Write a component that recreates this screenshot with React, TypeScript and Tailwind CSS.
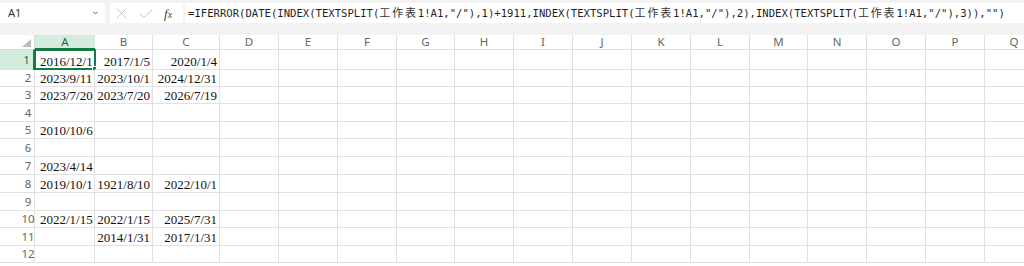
import React from "react";

const cols = [
  { id: "A", w: "w-[60px]" },
  { id: "B", w: "w-[58px]" },
  { id: "C", w: "w-[67px]" },
  { id: "D", w: "w-[59px]" },
  { id: "E", w: "w-[59px]" },
  { id: "F", w: "w-[59px]" },
  { id: "G", w: "w-[58px]" },
  { id: "H", w: "w-[59px]" },
  { id: "I", w: "w-[59px]" },
  { id: "J", w: "w-[59px]" },
  { id: "K", w: "w-[59px]" },
  { id: "L", w: "w-[59px]" },
  { id: "M", w: "w-[58px]" },
  { id: "N", w: "w-[59px]" },
  { id: "O", w: "w-[59px]" },
  { id: "P", w: "w-[59px]" },
  { id: "Q", w: "w-[59px]" },
];

const rowHeights = [
  "h-[20px]", "h-[17px]", "h-[17px]", "h-[18px]", "h-[17px]", "h-[18px]",
  "h-[18px]", "h-[18px]", "h-[18px]", "h-[17px]", "h-[18px]", "h-[17px]",
];

const data: string[][] = [
  ["2016/12/1", "2017/1/5", "2020/1/4"],
  ["2023/9/11", "2023/10/1", "2024/12/31"],
  ["2023/7/20", "2023/7/20", "2026/7/19"],
  [],
  ["2010/10/6"],
  [],
  ["2023/4/14"],
  ["2019/10/1", "1921/8/10", "2022/10/1"],
  [],
  ["2022/1/15", "2022/1/15", "2025/7/31"],
  ["", "2014/1/31", "2017/1/31"],
  [],
];

const SHEET = "工作表";

function Sheet() {
  return <span className="font-['Noto_Sans_CJK_TC',sans-serif] text-[11px] tracking-[1.8px] text-[#333]">{SHEET}</span>;
}

function Formula() {
  return (
    <div className="whitespace-nowrap font-['DejaVu_Sans_Mono',monospace] text-[10.6px] text-[#1f1f1f]">
      =IFERROR(DATE(INDEX(TEXTSPLIT(<Sheet />1!A1,"/"),1)+1911,INDEX(TEXTSPLIT(<Sheet />1!A1,"/"),2),INDEX(TEXTSPLIT(<Sheet />1!A1,"/"),3)),"")
    </div>
  );
}

export default function App() {
  return (
    <div className="h-[266px] w-[1024px] overflow-hidden bg-white font-['Noto_Sans',sans-serif]">
      {/* formula bar */}
      <div className="flex h-[35px] bg-[#f3f3f3] pt-[3px]">
        <div className="flex h-[20px] w-[105px] items-center justify-between bg-white pl-[8px] pr-[7px]">
          <span className="text-[11px] text-[#333]">A1</span>
          <svg width="5" height="4" viewBox="0 0 5 4">
            <path d="M0.5 0.8 L2.5 3 L4.5 0.8" fill="none" stroke="#666" strokeWidth="1" />
          </svg>
        </div>
        <div className="ml-[5px] flex h-[20px] w-[73px] items-center bg-white pl-[6px]">
          <svg width="11" height="11" viewBox="0 0 11 11">
            <path d="M0.5 0.5 L10.5 10.5 M10.5 0.5 L0.5 10.5" stroke="#c4c4c4" strokeWidth="1" />
          </svg>
          <svg className="ml-[12px]" width="14" height="9" viewBox="0 0 14 9">
            <path d="M0.5 4.5 L4.5 8.5 L13.5 0.5" fill="none" stroke="#c4c4c4" strokeWidth="1" />
          </svg>
          <span className="ml-[11px] font-['Liberation_Serif',serif] text-[13px] italic leading-none text-[#444]">
            f<span className="text-[10px]">x</span>
          </span>
        </div>
        <div className="ml-[2px] flex h-[20px] flex-1 items-center bg-white pl-[3px]">
          <Formula />
        </div>
      </div>

      {/* column headers */}
      <div className="flex h-[15px]">
        <div className="flex w-[35px] shrink-0 items-end justify-end border-r border-b border-[#d9d9d9] pb-[2px] pr-[3px]">
          <svg width="9" height="8" viewBox="0 0 9 8">
            <path d="M9 0 L9 8 L0 8 Z" fill="#bdbdbd" />
          </svg>
        </div>
        {cols.map((c) =>
          c.id === "A" ? (
            <div
              key={c.id}
              className={`${c.w} flex shrink-0 items-center justify-center border-b-2 border-[#107c41] bg-[#d3ecdd] text-[11.5px] leading-none text-[#1d6b3f]`}
            >
              {c.id}
            </div>
          ) : (
            <div
              key={c.id}
              className={`${c.w} flex shrink-0 items-center justify-center border-r border-b border-[#dedede] text-[11.5px] leading-none text-[#666]`}
            >
              {c.id}
            </div>
          )
        )}
      </div>

      {/* rows */}
      {rowHeights.map((h, r) => (
        <div key={r} className={`flex ${h}`}>
          {r === 0 ? (
            <div className="flex w-[35px] shrink-0 items-center justify-center border-r-2 border-[#107c41] bg-[#d3ecdd] pl-[20px] text-[11.5px] text-[#1d6b3f]">
              {r + 1}
            </div>
          ) : (
            <div className="flex w-[35px] shrink-0 items-center justify-center border-r border-b border-[#e1e1e1] pl-[22px] text-[11.5px] text-[#666]">
              {r + 1}
            </div>
          )}
          {cols.map((c, ci) => {
            const v = data[r][ci] ?? "";
            const align = ci === 0 ? "justify-start pl-[5px]" : "justify-end pr-[2px]";
            return (
              <div
                key={c.id}
                className={`${c.w} relative flex shrink-0 items-end ${align} border-r border-b border-[#e1e1e1] pb-[1px] font-['Liberation_Serif',serif] text-[13px] leading-none whitespace-nowrap text-[#111]`}
              >
                {v}
                {r === 0 && ci === 0 && (
                  <div className="absolute -top-[1px] -left-[1px] h-[21px] w-[62px] border-2 border-[#107c41]">
                    <div className="absolute -right-[3px] -bottom-[3px] h-[5px] w-[5px] border border-white bg-[#107c41]" />
                  </div>
                )}
              </div>
            );
          })}
        </div>
      ))}
    </div>
  );
}
